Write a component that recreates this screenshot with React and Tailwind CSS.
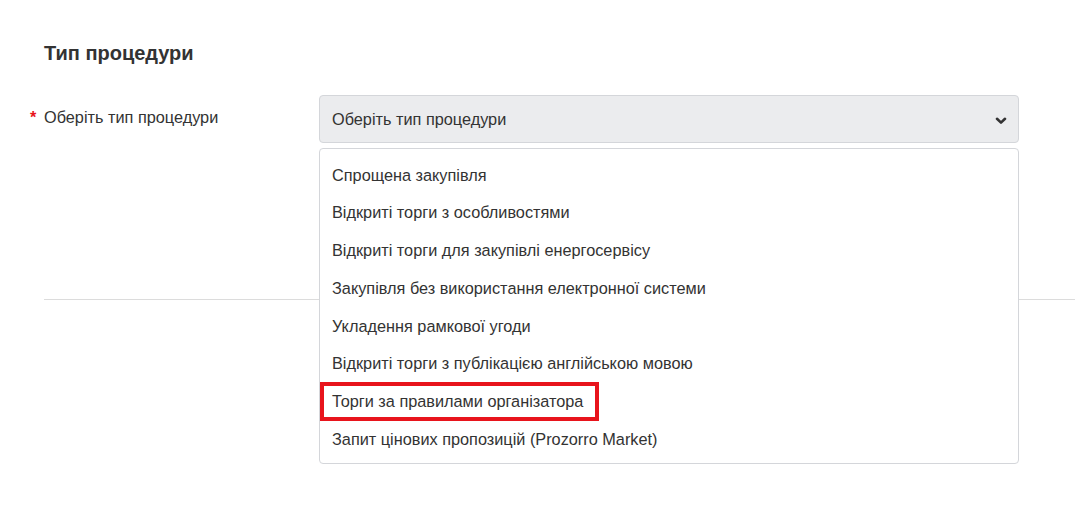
import React from "react";

const options = [
  "Спрощена закупівля",
  "Відкриті торги з особливостями",
  "Відкриті торги для закупівлі енергосервісу",
  "Закупівля без використання електронної системи",
  "Укладення рамкової угоди",
  "Відкриті торги з публікацією англійською мовою",
  "Торги за правилами організатора",
  "Запит цінових пропозицій (Prozorro Market)",
];

const Chevron = () => (
  <svg width="12" height="8" viewBox="0 0 12 8" fill="none" className="mt-[2px]">
    <path d="M2 1.8 L6 5.6 L10 1.8" stroke="#333" strokeWidth="2.6" strokeLinecap="round" strokeLinejoin="round" />
  </svg>
);

const App = () => {
  return (
    <div className="min-h-[505px] bg-white text-[#333] font-['Liberation_Sans',Arial,sans-serif]">
      <div className="pl-[44px] pt-[41px]">
        <h2 className="text-[20px] font-bold leading-[24px]">Тип процедури</h2>

        <div className="flex mt-[30px]">
          <label className="relative w-[275px] pt-[12px] text-[16.3px] leading-[20px]">
            <span className="absolute left-[-14px] top-[12px] text-[#e8141c] font-bold">*</span>
            Оберіть тип процедури
          </label>

          <div className="relative w-[700px]">
            <div className="flex items-center justify-between h-[48px] pl-[12px] pr-[11px] pt-[1px] bg-[#ebecee] border border-[#d4d6da] rounded-[4px] text-[16.3px]">
              <span>Оберіть тип процедури</span>
              <Chevron />
            </div>

            {/* open list */}
            <div className="absolute z-10 left-0 top-[53px] w-full bg-white border border-[#d4d6da] rounded-[4px] pt-[7px] pb-[5px]">
              {options.map((opt, i) => (
                <div key={opt} className="relative h-[37.75px] flex items-center px-[12px] text-[16.3px]">
                  {i === 6 && (
                    <span className="absolute left-0 -top-[1px] h-[39px] w-[279px] border-[4px] border-[#e8141c]" />
                  )}
                  <span className="relative">{opt}</span>
                </div>
              ))}
            </div>
          </div>
        </div>

        <div className="mt-[156px] border-t border-[#dcdcdc]" />
      </div>
    </div>
  );
};

export default App;
